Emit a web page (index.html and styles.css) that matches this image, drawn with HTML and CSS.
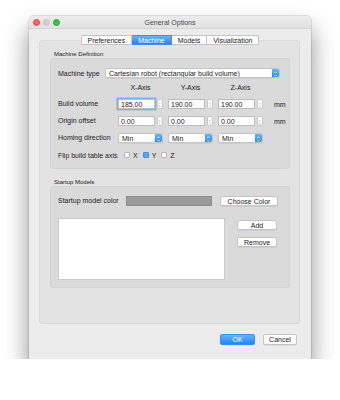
FILE: index.html
```html
<!DOCTYPE html>
<html lang="en">
<head>
  <meta charset="UTF-8" />
  <title>General Options</title>
  <link rel="stylesheet" href="styles.css">
</head>
<body>
  <div class="window">
    <div class="titlebar">
      <div class="lights">
        <span class="light red"></span>
        <span class="light gray"></span>
        <span class="light green"></span>
      </div>
      <div class="title">General Options</div>
      <div></div>
    </div>

    <div class="tabs">
      <span class="tab">Preferences</span>
      <span class="tab active">Machine</span>
      <span class="tab">Models</span>
      <span class="tab">Visualization</span>
    </div>

    <div class="pane">
      <div class="group-title">Machine Definition</div>
      <div class="group">
        <div class="machine-row">
          <span class="machine-label">Machine type</span>
          <div class="combo wide">
            <span class="combo-text">Cartesian robot (rectangular build volume)</span>
            <span class="cap"><svg width="7" height="10" viewBox="0 0 7 10"><path d="M2 4.2 L3.5 2.7 L5 4.2 M2 5.8 L3.5 7.3 L5 5.8" fill="none" stroke="#fff" stroke-width="0.8"/></svg></span>
          </div>
        </div>

        <div class="axes">
          <span></span>
          <span class="head">X-Axis</span>
          <span class="head">Y-Axis</span>
          <span class="head">Z-Axis</span>
          <span></span>

          <span class="row-label">Build volume</span>
          <div class="field"><span class="input focused">185.00</span><span class="stepper"><svg width="6" height="10" viewBox="0 0 6 10"><path d="M1.8 3.8 L3 2.6 L4.2 3.8 M1.8 6.2 L3 7.4 L4.2 6.2" fill="none" stroke="#666" stroke-width="0.7"/></svg></span></div>
          <div class="field"><span class="input">190.00</span><span class="stepper"><svg width="6" height="10" viewBox="0 0 6 10"><path d="M1.8 3.8 L3 2.6 L4.2 3.8 M1.8 6.2 L3 7.4 L4.2 6.2" fill="none" stroke="#666" stroke-width="0.7"/></svg></span></div>
          <div class="field"><span class="input">190.00</span><span class="stepper"><svg width="6" height="10" viewBox="0 0 6 10"><path d="M1.8 3.8 L3 2.6 L4.2 3.8 M1.8 6.2 L3 7.4 L4.2 6.2" fill="none" stroke="#666" stroke-width="0.7"/></svg></span></div>
          <span class="unit">mm</span>

          <span class="row-label">Origin offset</span>
          <div class="field"><span class="input">0.00</span><span class="stepper"><svg width="6" height="10" viewBox="0 0 6 10"><path d="M1.8 3.8 L3 2.6 L4.2 3.8 M1.8 6.2 L3 7.4 L4.2 6.2" fill="none" stroke="#666" stroke-width="0.7"/></svg></span></div>
          <div class="field"><span class="input">0.00</span><span class="stepper"><svg width="6" height="10" viewBox="0 0 6 10"><path d="M1.8 3.8 L3 2.6 L4.2 3.8 M1.8 6.2 L3 7.4 L4.2 6.2" fill="none" stroke="#666" stroke-width="0.7"/></svg></span></div>
          <div class="field"><span class="input">0.00</span><span class="stepper"><svg width="6" height="10" viewBox="0 0 6 10"><path d="M1.8 3.8 L3 2.6 L4.2 3.8 M1.8 6.2 L3 7.4 L4.2 6.2" fill="none" stroke="#666" stroke-width="0.7"/></svg></span></div>
          <span class="unit">mm</span>

          <span class="row-label">Homing direction</span>
          <div class="combo"><span class="combo-text">Min</span><span class="cap"><svg width="7" height="10" viewBox="0 0 7 10"><path d="M2 4.2 L3.5 2.7 L5 4.2 M2 5.8 L3.5 7.3 L5 5.8" fill="none" stroke="#fff" stroke-width="0.8"/></svg></span></div>
          <div class="combo"><span class="combo-text">Min</span><span class="cap"><svg width="7" height="10" viewBox="0 0 7 10"><path d="M2 4.2 L3.5 2.7 L5 4.2 M2 5.8 L3.5 7.3 L5 5.8" fill="none" stroke="#fff" stroke-width="0.8"/></svg></span></div>
          <div class="combo"><span class="combo-text">Min</span><span class="cap"><svg width="7" height="10" viewBox="0 0 7 10"><path d="M2 4.2 L3.5 2.7 L5 4.2 M2 5.8 L3.5 7.3 L5 5.8" fill="none" stroke="#fff" stroke-width="0.8"/></svg></span></div>
          <span></span>

          <div class="flip-row">
            <span class="flip-label">Flip build table axis</span>
            <span class="check"><span class="box"></span>X</span>
            <span class="check"><span class="box checked"><svg width="6" height="6" viewBox="0 0 6 6"><path d="M1.3 3.1 L2.5 4.4 L4.7 1.5" fill="none" stroke="#fff" stroke-width="0.9"/></svg></span>Y</span>
            <span class="check"><span class="box"></span>Z</span>
          </div>
        </div>
      </div>

      <div class="group-title second">Startup Models</div>
      <div class="group models">
        <div class="color-row">
          <span class="color-label">Startup model color</span>
          <span class="swatch"></span>
          <span class="button choose">Choose Color</span>
        </div>
        <div class="list-row">
          <div class="list"></div>
          <div class="side">
            <span class="button">Add</span>
            <span class="button">Remove</span>
          </div>
        </div>
      </div>
    </div>

    <div class="footer">
      <span class="button default">OK</span>
      <span class="button cancel">Cancel</span>
    </div>
  </div>
</body>
</html>
```

FILE: styles.css
```css
body {
  margin: 0;
  background: #fff;
  font-family: "Liberation Sans", Arial, sans-serif;
  font-size: 7px;
  color: #1a1a1a;
}

.window {
  width: 282px;
  margin: 16px 0 0 29px;
  background: #ececec;
  border-radius: 4px 4px 1px 1px;
  box-shadow: 0 14px 24px rgba(0, 0, 0, 0.45), 0 0 0 0.5px rgba(0, 0, 0, 0.2);
}

.titlebar {
  height: 12px;
  display: grid;
  grid-template-columns: 1fr auto 1fr;
  align-items: center;
  background: linear-gradient(#ececec, #e2e2e2);
  border-bottom: 1px solid #d4d4d4;
  border-radius: 4px 4px 0 0;
}
.lights {
  display: flex;
  gap: 3px;
  padding-left: 4px;
}
.light {
  width: 7px;
  height: 7px;
  border-radius: 50%;
  box-sizing: border-box;
}
.red { background: #fc605c; border: 0.5px solid #de4a44; }
.gray { background: #d0d0d0; border: 0.5px solid #c2c2c2; }
.green { background: #34c84a; border: 0.5px solid #27a93a; }
.title {
  color: #4a4a4a;
}

.tabs {
  display: flex;
  justify-content: center;
  margin-top: 6px;
  margin-bottom: -5px;
  position: relative;
  z-index: 1;
}
.tab {
  height: 10px;
  line-height: 9px;
  padding: 0 6px;
  background: #fff;
  border: 0.5px solid #c3c3c3;
  border-left: none;
  box-sizing: border-box;
}
.tab:first-child {
  border-left: 0.5px solid #c3c3c3;
  border-radius: 2px 0 0 2px;
}
.tab:last-child {
  border-radius: 0 2px 2px 0;
}
.tab.active {
  background: linear-gradient(#6ab2fb, #1f86fb);
  border-color: #3b8ef2;
  color: #fff;
}

.pane {
  margin: 0 11px 0 10px;
  height: 284px;
  box-sizing: border-box;
  padding-top: 9px;
  background: #e3e3e3;
  border: 1px solid #dadada;
  border-radius: 3px;
}
.group-title {
  font-size: 6px;
  line-height: 8px;
  padding-left: 14px;
}
.group-title.second {
  margin-top: 9px;
}
.group {
  margin: 0 9px 0 10px;
  padding: 9px 9px 8px 7px;
  background: #dadada;
  border: 1px solid #d3d3d3;
  border-radius: 3px;
}

.machine-row {
  display: flex;
  align-items: center;
  height: 10px;
}
.machine-label {
  width: 47px;
}

.combo {
  display: flex;
  height: 10px;
  box-sizing: border-box;
  background: #fff;
  border: 0.5px solid #c4c4c4;
  border-radius: 2px;
  box-shadow: 0 0.5px 0 rgba(0, 0, 0, 0.1);
}
.combo.wide {
  flex: 1;
}
.combo-text {
  flex: 1;
  line-height: 9px;
  padding-left: 3px;
  white-space: nowrap;
  overflow: hidden;
}
.cap {
  width: 7px;
  background: linear-gradient(#6ab2fb, #1f86fb);
  border-radius: 0 2px 2px 0;
  display: flex;
}

.axes {
  display: grid;
  grid-template-columns: 55px 45px 45px 45px auto;
  column-gap: 5px;
  row-gap: 7px;
  margin-top: 6px;
  align-items: center;
}
.head {
  text-align: center;
  line-height: 8px;
}
.row-label {
  line-height: 10px;
  white-space: nowrap;
}
.unit {
  padding-left: 6px;
}
.field {
  display: flex;
  gap: 2px;
  height: 10px;
}
.input {
  width: 37px;
  box-sizing: border-box;
  background: #fff;
  border: 0.5px solid #bdbdbd;
  line-height: 9px;
  padding-left: 2px;
}
.input.focused {
  box-shadow: 0 0 0 1.5px #84b2ea;
}
.stepper {
  width: 6px;
  box-sizing: border-box;
  background: #fff;
  border: 0.5px solid #c8c8c8;
  border-radius: 2px;
  display: flex;
}

.flip-row {
  grid-column: 1 / -1;
  display: flex;
  align-items: center;
  height: 10px;
}
.flip-label {
  width: 66px;
}
.check {
  display: flex;
  align-items: center;
  margin-right: 5px;
}
.box {
  width: 6px;
  height: 6px;
  box-sizing: border-box;
  background: #fff;
  border: 0.5px solid #b5b5b5;
  border-radius: 1px;
  margin-right: 3px;
  display: flex;
}
.box.checked {
  background: linear-gradient(#6ab2fb, #1f86fb);
  border-color: #3b8ef2;
}

.models {
  padding-top: 8px;
  padding-bottom: 7px;
}
.color-row {
  display: flex;
  align-items: center;
  height: 11px;
}
.color-label {
  width: 68px;
}
.swatch {
  width: 86px;
  height: 10px;
  background: #9b9b9b;
  border: 0.5px solid #8e8e8e;
  box-sizing: border-box;
}
.choose {
  margin-left: 8px;
  width: 58px;
}
.button {
  display: block;
  height: 10px;
  line-height: 9px;
  box-sizing: border-box;
  text-align: center;
  background: #fff;
  border: 0.5px solid #c5c5c5;
  border-radius: 2px;
  box-shadow: 0 0.5px 0 rgba(0, 0, 0, 0.12);
}

.list-row {
  display: flex;
  margin-top: 12px;
}
.list {
  width: 167px;
  height: 62px;
  box-sizing: border-box;
  background: #fff;
  border: 0.5px solid #cacaca;
}
.side {
  width: 40px;
  margin-left: 12px;
  padding-top: 2px;
  display: flex;
  flex-direction: column;
  gap: 7px;
}

.footer {
  display: flex;
  justify-content: flex-end;
  gap: 8px;
  padding: 10px 14px 14px 0;
}
.footer .button {
  height: 11px;
  line-height: 10px;
}
.default {
  width: 35px;
  background: linear-gradient(#6ab2fb, #1f86fb);
  border-color: #3b8ef2;
  color: #fff;
}
.cancel {
  width: 34px;
}
```
